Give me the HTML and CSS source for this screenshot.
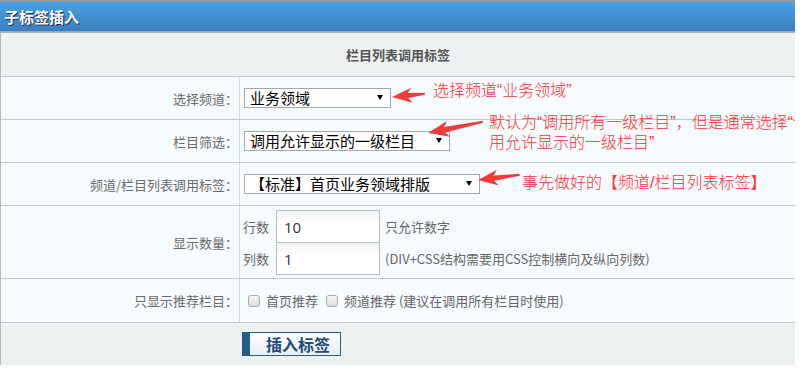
FILE: index.html
```html
<!DOCTYPE html>
<html lang="zh-CN">
<head>
    <meta charset="UTF-8">
    <title>子标签插入</title>
    <link rel="stylesheet" href="styles.css">
</head>
<body>
    <div class="page">
        <div class="titlebar">子标签插入</div>

        <div class="form">
            <div class="form-head">栏目列表调用标签</div>

            <div class="row">
                <div class="label">选择频道：</div>
                <div class="field">
                    <span class="select"><select class="w-channel"><option>业务领域</option></select></span>
                </div>
            </div>

            <div class="row">
                <div class="label">栏目筛选：</div>
                <div class="field">
                    <span class="select"><select class="w-filter"><option>调用允许显示的一级栏目</option></select></span>
                </div>
            </div>

            <div class="row">
                <div class="label">频道/栏目列表调用标签：</div>
                <div class="field">
                    <span class="select"><select class="w-tag"><option>【标准】首页业务领域排版</option></select></span>
                </div>
            </div>

            <div class="row row-tall">
                <div class="label">显示数量：</div>
                <div class="field qty">
                    <div class="qty-line">
                        <span class="qty-name">行数</span>
                        <input class="num" type="text" value="10">
                        <span class="hint">只允许数字</span>
                    </div>
                    <div class="qty-line">
                        <span class="qty-name">列数</span>
                        <input class="num" type="text" value="1">
                        <span class="hint">(DIV+CSS结构需要用CSS控制横向及纵向列数)</span>
                    </div>
                </div>
            </div>

            <div class="row row-check">
                <div class="label">只显示推荐栏目：</div>
                <div class="field checks">
                    <label class="check"><input type="checkbox"> 首页推荐</label>
                    <label class="check"><input type="checkbox"> 频道推荐 (建议在调用所有栏目时使用)</label>
                </div>
            </div>

            <div class="actions">
                <button type="button" class="btn">插入标签</button>
            </div>
        </div>

        <!-- red annotations drawn over the form -->
        <svg class="arrows" width="795" height="369">
            <polygon transform="translate(392 97) rotate(-5.2)" points="0,0 20,-7.5 16,-2.5 33,-1.2 33,0.8 16,2.5 20,7.5"/>
            <polygon transform="translate(428 133) rotate(-11.3)" points="0,0 21,-8 17,-2.8 56,-1.3 56,0.8 17,2.8 21,8"/>
            <polygon transform="translate(478 180) rotate(-6.8)" points="0,0 20,-8 16,-2.6 42,-1.2 42,0.8 16,2.6 20,8"/>
        </svg>
        <div class="note note-channel">选择频道“业务领域”</div>
        <div class="note note-filter">默认为“调用所有一级栏目”，但是通常选择“调<br>用允许显示的一级栏目”</div>
        <div class="note note-tag">事先做好的【频道/栏目列表标签】</div>
    </div>
</body>
</html>
```

FILE: styles.css
```css
/* Page frame */
body {
    margin: 0;
    background: #fff;
    font-family: "Noto Sans CJK SC", sans-serif;
}
.page {
    position: relative;
    width: 795px;
    height: 369px;
    overflow: hidden;
}

/* Blue title bar */
.titlebar {
    height: 29px;
    padding-left: 4px;
    border-top: 2px solid #8f99a2;
    border-bottom: 1px solid #72b3ea;
    background: linear-gradient(#49a1e4, #3a7ebf);
    color: #fff;
    font-size: 15px;
    font-weight: bold;
    line-height: 29px;
    text-shadow: 1px 1px 0 #2a2440;
}

/* Form table */
.form {
    border-top: 1px solid #a9b2b8;
    border-left: 1px solid #b3babf;
}
.form-head {
    height: 44px;
    box-sizing: border-box;
    border-bottom: 1px solid #c4c8cb;
    background: #eef1f2;
    color: #555;
    font-size: 13px;
    font-weight: bold;
    line-height: 43px;
    text-align: center;
}
.row {
    display: grid;
    grid-template-columns: 239px 1fr;
    height: 43px;
    box-sizing: border-box;
    border-bottom: 1px solid #c4c8cb;
    background: #f6fbfe;
}
.row-tall {
    height: 73px;
}
.row-check {
    height: 44px;
}
.label {
    display: flex;
    align-items: center;
    justify-content: flex-end;
    padding-right: 1px;
    border-right: 1px solid #d3dbe0;
    color: #6b6b6b;
    font-size: 13px;
}
.field {
    display: flex;
    align-items: center;
    padding-left: 4px;
    color: #666;
    font-size: 13px;
}

/* Drop downs */
.select {
    position: relative;
    display: inline-block;
}
.select::after {
    content: '';
    position: absolute;
    right: 8px;
    top: 7px;
    border-left: 3px solid transparent;
    border-right: 3px solid transparent;
    border-top: 5px solid #000;
    pointer-events: none;
}
.select select {
    appearance: none;
    height: 20px;
    box-sizing: border-box;
    padding: 0 0 0 5px;
    border: 1px solid #a7a7a7;
    border-radius: 0;
    background: #fff;
    color: #000;
    font-family: "Noto Sans CJK SC", sans-serif;
    font-size: 15px;
    line-height: 18px;
}
.w-channel { width: 147px; }
.w-filter { width: 206px; }
.w-tag { width: 236px; }

/* Rows / columns count */
.qty {
    flex-direction: column;
    align-items: flex-start;
    justify-content: flex-start;
    padding-top: 4px;
    padding-left: 3px;
}
.qty-line {
    display: flex;
    align-items: center;
}
.qty-line + .qty-line {
    margin-top: -1px;
}
.qty-name {
    margin-right: 7px;
}
.num {
    width: 104px;
    height: 33px;
    box-sizing: border-box;
    padding: 0 0 0 7px;
    border: 1px solid #b9bcbe;
    background: linear-gradient(#f1f2f3, #fff 40%);
    color: #333;
    font-family: "Open Sans", sans-serif;
    font-size: 15px;
}
.hint {
    margin-left: 5px;
}

/* Recommend checkboxes */
.checks {
    padding-left: 8px;
}
.check {
    display: flex;
    align-items: center;
    margin-right: 8px;
}
.check input {
    appearance: none;
    width: 12px;
    height: 12px;
    margin: 0 6px 0 0;
    border: 1px solid #a9acae;
    border-radius: 3px;
    background: linear-gradient(#f6f6f6, #dcdcdc);
}

/* Bottom bar with button */
.actions {
    height: 42px;
    box-sizing: border-box;
    padding: 9px 0 0 241px;
    background: #eef1f2;
}
.btn {
    width: 99px;
    height: 24px;
    padding: 0 0 0 6px;
    border: 1px solid #235f8c;
    border-left: 8px solid #235f8c;
    background: linear-gradient(#fff, #e8eef2);
    color: #1e4c78;
    font-family: "Noto Sans CJK SC", sans-serif;
    font-size: 16px;
    font-weight: bold;
    line-height: 20px;
}

/* Red annotations */
.arrows {
    position: absolute;
    top: 0;
    left: 0;
    fill: #f33b3b;
    pointer-events: none;
}
.note {
    position: absolute;
    color: #ff3030;
    font-family: "Liberation Sans", "Noto Sans CJK SC", sans-serif;
    font-size: 16px;
    font-weight: 300;
    line-height: 20px;
    white-space: nowrap;
}
.note-channel { left: 433px; top: 81px; }
.note-filter { left: 489px; top: 113px; }
.note-tag { left: 522px; top: 173px; }
```
